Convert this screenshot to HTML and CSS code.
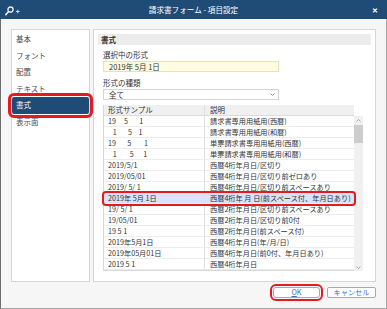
FILE: index.html
```html
<!DOCTYPE html>
<html lang="ja">
<head>
    <meta charset="UTF-8">
    <title>請求書フォーム - 項目設定</title>
    <link rel="stylesheet" href="styles.css">
</head>
<body>
<div class="window">
    <!-- title bar -->
    <header class="titlebar">
        <span class="tb-slot">
            <svg class="app-icon" width="16" height="10" viewBox="0 0 16 10">
                <circle cx="5.5" cy="3.6" r="2.6" fill="none" stroke="#e8f0f8" stroke-width="1.3"/>
                <line x1="3.6" y1="5.5" x2="0.8" y2="8.6" stroke="#e8f0f8" stroke-width="1.6" stroke-linecap="round"/>
                <path d="M11 5.5h3.6M12.8 3.7v3.6" stroke="#cfe0f0" stroke-width="1"/>
            </svg>
        </span>
        <span class="title">請求書フォーム - 項目設定</span>
        <span class="tb-slot close">✕</span>
    </header>

    <div class="body">
        <div class="panels">
            <ul class="nav">
                <li>基本</li>
                <li>フォント</li>
                <li>配置</li>
                <li>テキスト</li>
                <li class="active">書式</li>
                <li>表示面</li>
            </ul>

            <section class="content">
                <h2 class="section-title">書式</h2>
                <div class="fields">
                    <div class="field-label">選択中の形式</div>
                    <div class="current">2019年 5月 1日</div>
                    <div class="field-label second">形式の種類</div>
                    <div class="select">全て
                        <svg class="caret" width="5" height="3" viewBox="0 0 5 3"><path d="M0.5 0.5L2.5 2.5L4.5 0.5" fill="none" stroke="#777" stroke-width="0.8"/></svg>
                    </div>

                    <div class="list">
                        <div class="grid">
                            <div class="row head"><span>形式サンプル</span><span>説明</span></div>
                            <div class="row"><span>19     5       1</span><span>請求書専用用紙用(西暦)</span></div>
                            <div class="row"><span>   1       5    1</span><span>請求書専用用紙用(和暦)</span></div>
                            <div class="row"><span>19       5        1</span><span>単票請求書専用用紙用(西暦)</span></div>
                            <div class="row"><span>   1        5      1</span><span>単票請求書専用用紙用(和暦)</span></div>
                            <div class="row"><span>2019/5/1</span><span>西暦4桁年月日/区切り</span></div>
                            <div class="row"><span>2019/05/01</span><span>西暦4桁年月日/区切り前ゼロあり</span></div>
                            <div class="row"><span>2019/ 5/ 1</span><span>西暦4桁年月日/区切り前スペースあり</span></div>
                            <div class="row selected"><span>2019年 5月 1日</span><span>西暦4桁年 月 日(前スペース付、年月日あり)</span></div>
                            <div class="row"><span>19/ 5/ 1</span><span>西暦2桁年月日/区切り前スペースあり</span></div>
                            <div class="row"><span>19/05/01</span><span>西暦2桁年月日/区切り前0付</span></div>
                            <div class="row"><span>19 5 1</span><span>西暦2桁年月日(前スペース付)</span></div>
                            <div class="row"><span>2019年5月1日</span><span>西暦4桁年月日(年/月/日)</span></div>
                            <div class="row"><span>2019年05月01日</span><span>西暦4桁年月日(前0付、年月日あり)</span></div>
                            <div class="row"><span>2019 5 1</span><span>西暦4桁年月日</span></div>
                        </div>
                        <div class="scrollbar">
                            <svg class="arrow" width="5" height="3" viewBox="0 0 5 3"><path d="M0.5 2.5L2.5 0.5L4.5 2.5" fill="none" stroke="#9a9a9a" stroke-width="0.8"/></svg>
                            <span class="thumb"></span>
                            <svg class="arrow down" width="5" height="3" viewBox="0 0 5 3"><path d="M0.5 0.5L2.5 2.5L4.5 0.5" fill="none" stroke="#9a9a9a" stroke-width="0.8"/></svg>
                        </div>
                    </div>
                </div>
            </section>
        </div>

        <div class="actions">
            <button class="btn primary" type="button"><u>O</u>K</button>
            <button class="btn" type="button">キャンセル</button>
        </div>
    </div>
</div>
</body>
</html>
```

FILE: styles.css
```css
body {
    margin: 0;
    font-family: "Noto Sans CJK JP", "Noto Sans", sans-serif;
    font-size: 7.5px;
    color: #333;
}

.window {
    width: 387px;
    height: 309px;
    display: flex;
    flex-direction: column;
    background: #f6f6f6;
}

/* title bar */
.titlebar {
    height: 19px;
    flex: none;
    display: flex;
    align-items: center;
    background: #1f4b77;
    color: #fff;
}
.tb-slot {
    width: 26px;
    display: flex;
    align-items: center;
}
.app-icon {
    margin-left: 5px;
    margin-top: 2px;
}
.title {
    flex: 1;
    text-align: center;
    font-size: 7.6px;
}
.close {
    justify-content: flex-end;
    padding-right: 9px;
    box-sizing: border-box;
    font-size: 7px;
    font-weight: bold;
}

.body {
    flex: 1;
    display: flex;
    flex-direction: column;
    padding: 10px 10px 0 10px;
    border-left: 1px solid #6e6e6e;
    border-right: 1px solid #a6a6a6;
    border-bottom: 1px solid #a6a6a6;
}

.panels {
    height: 253px;
    display: flex;
    gap: 3px;
}

/* left menu */
.nav {
    width: 79px;
    box-sizing: border-box;
    margin: 0;
    padding: 1px 0 0;
    list-style: none;
    background: #fff;
    border: 1px solid #d6d6d6;
}
.nav li {
    height: 16.6px;
    line-height: 16.6px;
    padding-left: 4px;
    color: #4a4a4a;
}
.nav li.active {
    background: #1f4b77;
    color: #fff;
    outline: 3px solid #e51a21;
    outline-offset: 1px;
    border-radius: 2px;
}

/* right content */
.content {
    flex: 1;
    box-sizing: border-box;
    padding: 4px;
    background: #fff;
    border: 1px solid #d6d6d6;
}
.section-title {
    margin: 0;
    height: 11px;
    line-height: 11px;
    padding-left: 3px;
    font-size: 7.5px;
    font-weight: bold;
    background: #ececec;
}
.fields {
    padding: 0 5px;
}
.field-label {
    margin-top: 4px;
    height: 11px;
    line-height: 11px;
}
.field-label.second {
    margin-top: 5px;
}
.current, .select {
    width: 176px;
    height: 11px;
    box-sizing: border-box;
    line-height: 9px;
    padding-left: 5px;
}
.current {
    margin-top: 1px;
    background: #fdfbe0;
    border: 1px solid #e6e2b8;
}
.select {
    margin-top: 1px;
    display: flex;
    align-items: center;
    justify-content: space-between;
    border: 1px solid #d4d4d4;
}
.caret {
    margin-right: 3px;
}

/* format list */
.list {
    margin-top: 5px;
    display: flex;
    align-items: flex-start;
}
.grid {
    width: 250px;
    border-left: 1px solid #d8d8d8;
    border-bottom: 1px solid #d8d8d8;
}
.row {
    display: grid;
    grid-template-columns: 100px 150px;
    height: 11px;
    line-height: 10px;
    box-sizing: border-box;
    border-bottom: 1px solid #ececec;
    font-size: 7.2px;
}
.row span {
    white-space: pre;
}
.row span:first-child {
    padding-left: 4px;
}
.row span:last-child {
    padding-left: 5px;
    border-left: 1px solid #e0e0e0;
}
.row.head {
    background: #f0f0f0;
    border-bottom: 1px solid #dcdcdc;
    font-size: 7.5px;
}
.row.selected {
    background: #d9e3f7;
    outline: 2.5px solid #e51a21;
    outline-offset: 0.5px;
    border-radius: 2px;
    position: relative;
}

.scrollbar {
    width: 9px;
    height: 155px;
    margin-top: 11px;
    box-sizing: border-box;
    padding: 3px 0 2px;
    display: flex;
    flex-direction: column;
    align-items: center;
    background: #f0f0f0;
}
.thumb {
    width: 9px;
    height: 18px;
    margin-top: 3px;
    background: #cdcdcd;
}
.arrow.down {
    margin-top: auto;
}

/* buttons */
.actions {
    display: flex;
    justify-content: flex-end;
    gap: 7px;
    padding-top: 5px;
}
.btn {
    height: 11px;
    padding: 0;
    font-family: inherit;
    font-size: 7.2px;
    line-height: 9px;
    color: #3d6fd6;
    background: #fff;
    border: 1px solid #a9a9a9;
    border-radius: 2px;
}
.btn.primary {
    width: 47px;
    outline: 2.5px solid #e51a21;
    outline-offset: 1.5px;
    border-radius: 3px;
}
.btn:not(.primary) {
    width: 49px;
}
```
